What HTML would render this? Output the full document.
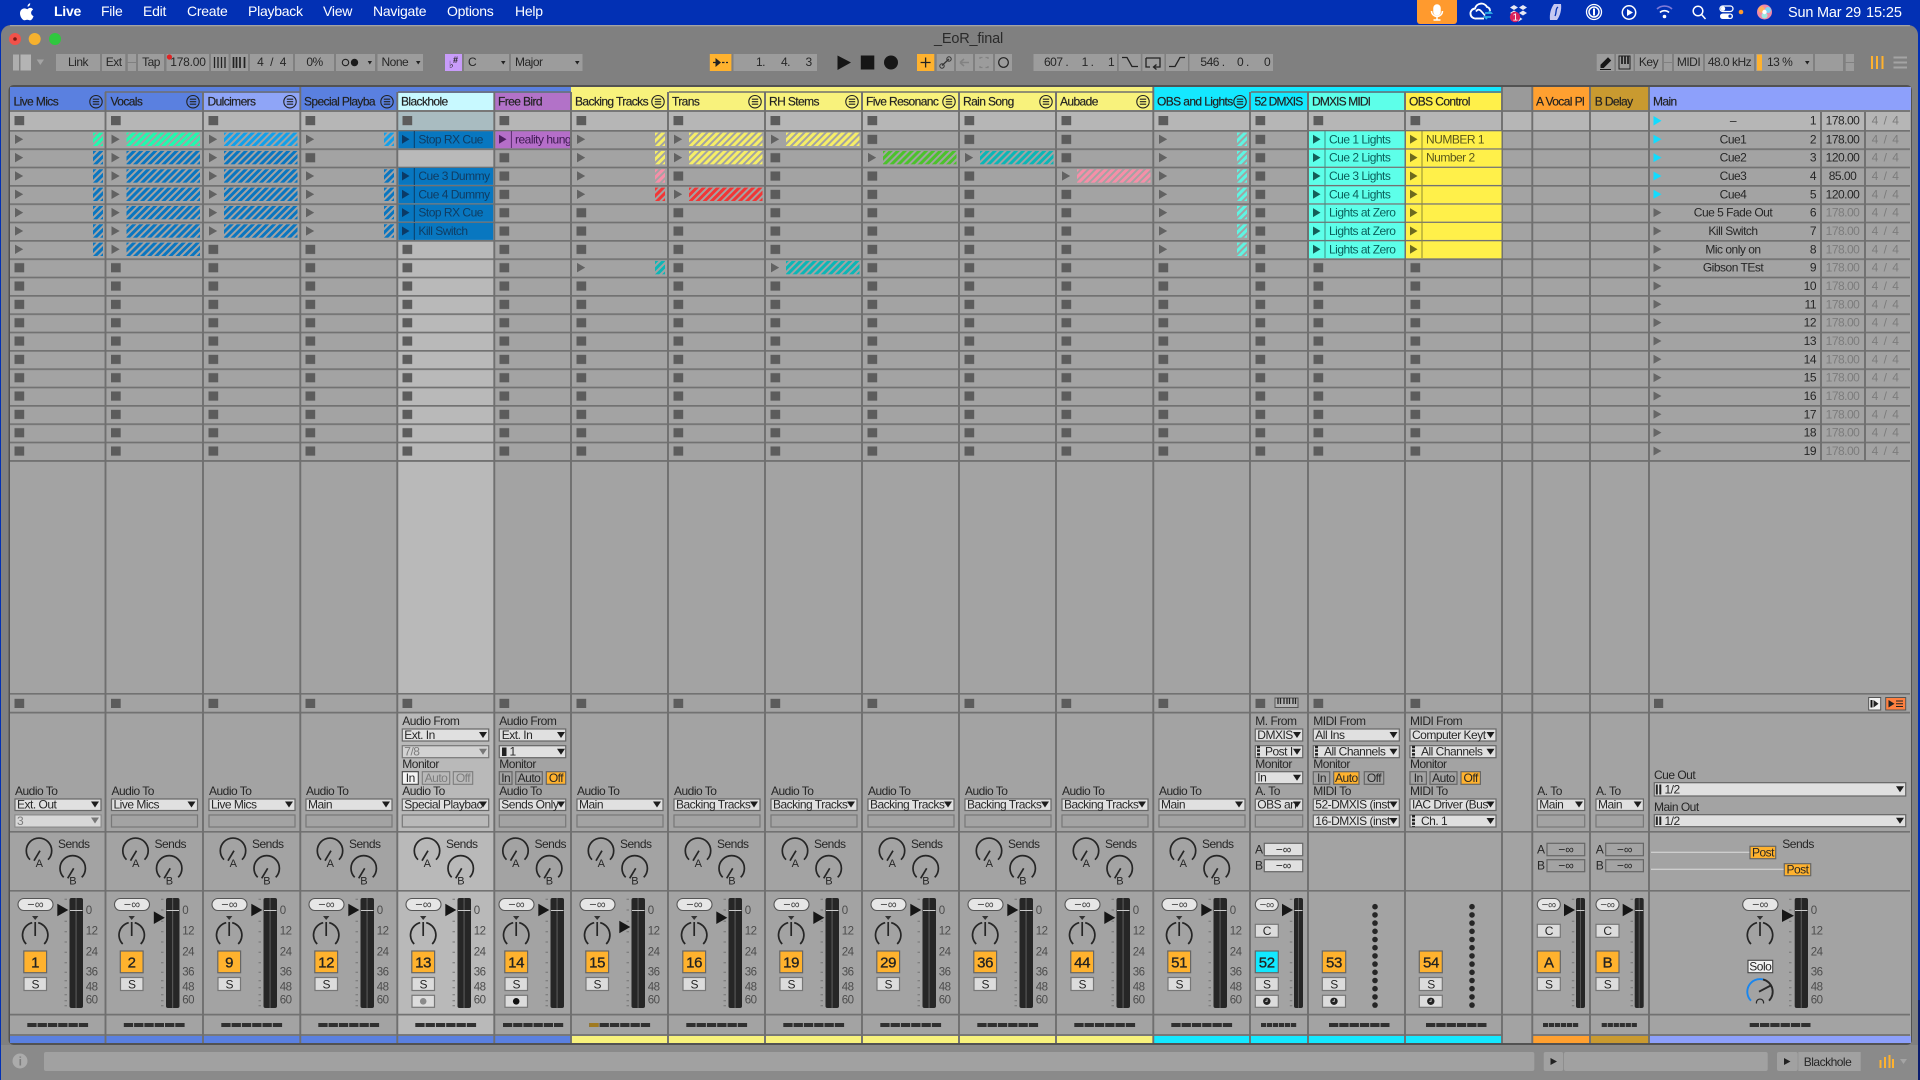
<!DOCTYPE html>
<html><head><meta charset="utf-8"><title>_EoR_final</title>
<style>
html,body{margin:0;padding:0;background:#0430b0;overflow:hidden}
svg{display:block;filter:blur(.3px)}
text{font-family:"Liberation Sans",sans-serif;font-size:12px;letter-spacing:-.5px;fill:#262626}
.m{fill:#fff;font-size:14px;letter-spacing:-.25px}
.c{text-anchor:middle}
.b{fill:#9c9c9c}
.d{fill:#e0e0e0;stroke:#666;stroke-width:1.2}
.e{fill:none;stroke:#787878;stroke-width:1.2}
.q{fill:#a3a3a3;stroke:#666;stroke-width:1.2}
.o{fill:#ffb22e;stroke:#666;stroke-width:1.2}
.n{font-size:15px;text-anchor:middle;letter-spacing:-.3px;fill:#222;stroke:#222;stroke-width:.3px}
.g{fill:#7c7c7c}
.s{fill:#7c7c7c;word-spacing:3px}
.h{fill:#222;letter-spacing:-.6px;stroke:#222;stroke-width:.18px}
.t{fill:#0b5f5a}
.y{fill:#59561c}
.w{fill:#103c62}
.sc{fill:#4c4c4c;font-size:11.5px}
</style></head><body>
<svg xmlns="http://www.w3.org/2000/svg" width="1920" height="1080" viewBox="0 0 1920 1080">
<defs>
<pattern id="gr" width="100" height="18.3333" y="130" patternUnits="userSpaceOnUse"><rect width="100" height="1.7" fill="#727272"/></pattern>
<pattern id="st" width="40" height="18.3333" y="130" patternUnits="userSpaceOnUse"><rect x="4.500" y="4.800" width="9.700" height="9.200" fill="#5c5c5c"/></pattern>
<pattern id="pb" width="5" height="5" patternUnits="userSpaceOnUse" patternTransform="rotate(45)"><rect width="3" height="5" fill="#0a76c0"/></pattern>
<pattern id="pl" width="5" height="5" patternUnits="userSpaceOnUse" patternTransform="rotate(45)"><rect width="3" height="5" fill="#12a0ea"/></pattern>
<pattern id="pm" width="5" height="5" patternUnits="userSpaceOnUse" patternTransform="rotate(45)"><rect width="3" height="5" fill="#1dfcae"/></pattern>
<pattern id="py" width="5" height="5" patternUnits="userSpaceOnUse" patternTransform="rotate(45)"><rect width="3" height="5" fill="#f6ee68"/></pattern>
<pattern id="pg" width="5" height="5" patternUnits="userSpaceOnUse" patternTransform="rotate(45)"><rect width="3" height="5" fill="#4cc22c"/></pattern>
<pattern id="pt" width="5" height="5" patternUnits="userSpaceOnUse" patternTransform="rotate(45)"><rect width="3" height="5" fill="#0cb6b6"/></pattern>
<pattern id="pp" width="5" height="5" patternUnits="userSpaceOnUse" patternTransform="rotate(45)"><rect width="3" height="5" fill="#f68fa8"/></pattern>
<pattern id="pr" width="5" height="5" patternUnits="userSpaceOnUse" patternTransform="rotate(45)"><rect width="3" height="5" fill="#f23636"/></pattern>
<pattern id="pc" width="5" height="5" patternUnits="userSpaceOnUse" patternTransform="rotate(45)"><rect width="3" height="5" fill="#5ef4e2"/></pattern>
<polygon id="tr" points="5,4.600 13.200,9.300 5,14" fill="#626262"/>
<g id="TL"><use href="#tr"/><rect x="20" y="2.600" width="73.500" height="13.400"/></g>
<g id="TK"><use href="#tr"/><rect x="83" y="2.600" width="10" height="13.400"/></g>
<g id="ms"><rect x="4.500" y="116" width="9.700" height="9.200" fill="#5c5c5c"/><rect x="4.500" y="698.800" width="9.700" height="9.200" fill="#5c5c5c"/></g>
<polygon id="ar" points="-4,-3 4,-3 0,3" fill="#1c1c1c"/>
<polygon id="ag" points="-4,-3 4,-3 0,3" fill="#777"/>
<g id="hi" fill="none" stroke="#222" stroke-width="1.100"><circle r="6.200"/><path d="M-3.200-2.500H3.200M-3.200 0H3.200M-3.200 2.500H3.200"/></g>
<g id="io"><text x="5" y="795">Audio To</text><rect class="d" x="5" y="799" width="86" height="11.500"/><use href="#ar" x="85" y="804.500"/><rect class="e" x="5" y="815" width="86" height="12"/></g>
<g id="kn" fill="none" stroke="#262626" stroke-width="1.700"><path d="M-9 9A12.700 12.700 0 1 1 9 9"/><path d="M1 0L-5 10"/></g>
<g id="sd"><use href="#kn" x="29" y="850.700"/><use href="#kn" x="62.700" y="868.300"/><text x="48" y="848">Sends</text><text class="c" x="29" y="867" style="font-size:11px">A</text><text class="c" x="62.700" y="884.500" style="font-size:11px">B</text></g>
<g id="pk" fill="none" stroke="#262626" stroke-width="1.700"><path d="M-9 9A12.700 12.700 0 0 1 -3 -12.300M9 9A12.700 12.700 0 0 0 3 -12.300M0 -13V1"/><polygon points="-3.200,-19 3.200,-19 0,-15" fill="#333" stroke="none"/></g>
<path id="tk" d="M0 899.300h2.500M0 910h2.500M0 921.300h2.500M0 931.700h2.500M0 942h2.500M0 952.300h2.500M0 962.700h2.500M0 972.300h2.500M0 980.700h2.500M0 987.700h2.500M0 994.700h2.500M0 1000.700h2.500M0 1005.700h2.500" stroke="#757575" stroke-width="1" fill="none"/>
<g id="inf"><text class="c" y="908.500" style="font-size:12.500px;letter-spacing:0;fill:#444">−∞</text></g>
<g id="mx"><rect x="8" y="898.500" width="35" height="12" rx="6" fill="#e6e6e6" stroke="#555" stroke-width="1.100"/><use href="#inf" x="25.500"/><use href="#pk" x="25.200" y="935"/><rect x="14" y="977.500" width="22.500" height="13" fill="#dcdcdc" stroke="#777" stroke-width="1.200"/><text class="c" x="25.200" y="988.500">S</text><use href="#tk" x="54.500"/><rect x="59.500" y="898" width="13.500" height="110" rx="2" fill="#262626"/><rect x="65.500" y="898" width="1.200" height="110" fill="#555"/><rect x="60" y="910" width="12.500" height="1" fill="#ccc"/></g>
<g id="sc"><text class="sc" x="75.700" y="914">0</text><text class="sc" x="75.700" y="934.700">12</text><text class="sc" x="75.700" y="955.700">24</text><text class="sc" x="75.700" y="975.700">36</text><text class="sc" x="75.700" y="990.700">48</text><text class="sc" x="75.700" y="1003.700">60</text></g>
<polygon id="vt" points="47.300,-6.300 58.300,0 47.300,6.300" fill="#161616"/>
<rect id="ac" class="o" x="13.800" y="951" width="22.800" height="21.700"/>
<path id="xf" d="M17.300 1025H78.800" stroke="#303030" stroke-width="4" stroke-dasharray="9.300 1" fill="none"/>
<path id="xn" d="M10 1025H46" stroke="#303030" stroke-width="4" stroke-dasharray="5.200 .8" fill="none"/>
<g id="nm"><rect x="4.300" y="898.500" width="23" height="12" rx="6" fill="#e6e6e6" stroke="#555" stroke-width="1.100"/><text class="c" x="15.800" y="908.500" style="font-size:11.500px;letter-spacing:-.3px;fill:#444">−∞</text><rect x="4.300" y="924.300" width="23" height="13" fill="#dcdcdc" stroke="#777" stroke-width="1.200"/><text class="c" x="15.800" y="935">C</text><rect x="4.300" y="977.500" width="23" height="13" fill="#dcdcdc" stroke="#777" stroke-width="1.200"/><text class="c" x="15.800" y="988.500">S</text><use href="#tk" x="38.800"/><rect x="43" y="898" width="9" height="110" rx="2" fill="#262626"/><rect x="47" y="898" width="1" height="110" fill="#555"/><rect x="43.500" y="910" width="8" height="1" fill="#ccc"/></g>
<polygon id="vn" points="31,-6.300 42,0 31,6.300" fill="#161616"/>
<g id="clk"><rect x="0" y="0" width="23" height="12" fill="#dcdcdc" stroke="#777" stroke-width="1.200"/><circle cx="11.500" cy="6" r="3.700" fill="#222"/><path d="M11.800 3.800V6H10" stroke="#ddd" stroke-width=".8" fill="none"/></g>
<g id="dots" fill="#262626"><circle cy="906.700" r="2.800"/><circle cy="914.900" r="2.800"/><circle cy="923.100" r="2.800"/><circle cy="931.300" r="2.800"/><circle cy="939.500" r="2.800"/><circle cy="947.700" r="2.800"/><circle cy="955.900" r="2.800"/><circle cy="964.100" r="2.800"/><circle cy="972.300" r="2.800"/><circle cy="980.500" r="2.800"/><circle cy="988.700" r="2.800"/><circle cy="996.900" r="2.800"/><circle cy="1005.100" r="2.800"/></g>
<path id="vd" d="M1.500 0V12" stroke="#222" stroke-width="3" stroke-dasharray="2.500 1.200" fill="none"/>
<clipPath id="cf"><rect x="495" y="130" width="75" height="19"/></clipPath>
</defs>

<!-- desktop & window -->
<rect width="1920" height="1080" fill="#0230b4"/>
<rect x="1912" y="1000" width="8" height="80" fill="#0a1c6e"/>
<rect x="1" y="25" width="1917" height="1075" rx="10" fill="#808080"/>
<rect x="10" y="25.300" width="1900" height=".9" fill="#b4b4b4"/>
<rect x="1" y="1045" width="1917" height="35" fill="#8a8a8a"/>

<!-- menu bar -->
<path fill="#fff" d="M30.500 7.800c-1 0-2.300.6-3.100 1.400-.7-.2-1.800-.8-2.900-.8-2.500 0-4.500 2.100-4.500 5 0 3.200 2.400 6.900 4.400 6.900 1 0 1.500-.6 2.800-.6s1.800.6 2.800.6c1.600 0 3-2.300 3.500-4.100-1.500-.7-2.400-1.900-2.400-3.400 0-1.400.8-2.500 2-3.200-.7-1.100-1.800-1.800-2.600-1.800zM30.200 3.300c-1.400.2-2.800 1.700-2.600 3.400 1.500 0 2.800-1.600 2.600-3.400z"/>
<text class="m" x="54" y="16" style="font-weight:bold">Live</text>
<text class="m" x="101" y="16">File</text><text class="m" x="143" y="16">Edit</text><text class="m" x="187" y="16">Create</text><text class="m" x="248" y="16">Playback</text><text class="m" x="323" y="16">View</text><text class="m" x="373" y="16">Navigate</text><text class="m" x="447" y="16">Options</text><text class="m" x="515" y="16">Help</text>
<path d="M1417 0H1457V21a3 3 0 0 1-3 3H1420a3 3 0 0 1-3-3Z" fill="#ff9a2e"/>
<g fill="none" stroke="#fff" stroke-width="1.500"><rect x="1434" y="5" width="6" height="10" rx="3" fill="#fff"/><path d="M1431.500 11a5.500 5.500 0 0 0 11 0M1437 16.500V19.500M1433.500 20H1440.500"/>
<path d="M1476 18.500a5 5 0 0 1-1-10 6.500 6.500 0 0 1 12-1.500c2 .5 3 2 3 4" stroke-width="1.900"/><path d="M1476 11.500c2-3 4-2 6 .5l3 3.500" stroke-width="1.700"/><path d="M1476 18.500H1484" stroke-width="1.900"/>
<circle cx="1594" cy="12" r="7.500" stroke-width="1.300"/><circle cx="1594" cy="12" r="5"/><path d="M1594 8.500V15.500" stroke-width="2"/>
<circle cx="1629" cy="12.500" r="6.700"/>
<circle cx="1698" cy="11" r="4.800"/><path d="M1701.500 14.500L1705.500 19"/></g>
<path d="M1485 13h6l-2-2M1491 17h-6l2 2" stroke="#2fb0e8" stroke-width="1.800" fill="none"/>
<path d="M1514 5l4 2.500-4 2.500-4-2.500zM1523 5l4 2.500-4 2.500-4-2.500zM1514 10.500l4 2.500-4 2.500-4-2.500zM1523 10.500l4 2.500-4 2.500-4-2.500zM1518.500 16.500l4 2.500-4 2.500-4-2.500z" fill="#e8e8f4"/>
<circle cx="1515" cy="17" r="5.200" fill="#d8205c"/><text x="1515" y="20.700" class="c" style="fill:#fff;font-size:10px">1</text>
<path d="M1550 20c-.8-6 1-12 4-16h7c.8 6-1 12-4 16z" fill="#c6c8f2"/><path d="M1558 7c-3 2-1 5-3 9" stroke="#0230b4" fill="none" stroke-width="1.300"/>
<polygon points="1627,9 1627,16 1633,12.500" fill="#fff"/>
<path d="M1657 9a11 11 0 0 1 15 0" stroke="#7f7ad8" stroke-width="1.700" fill="none"/><path d="M1660 12.500a6.500 6.500 0 0 1 9 0" stroke="#fff" stroke-width="1.700" fill="none"/><circle cx="1664.500" cy="16.500" r="1.800" fill="#fff"/>
<rect x="1720" y="6" width="13" height="5.500" rx="2.700" fill="none" stroke="#fff" stroke-width="1.300"/><rect x="1720" y="13.500" width="13" height="5.500" rx="2.700" fill="#fff"/><circle cx="1723" cy="8.700" r="2.200" fill="#fff"/><circle cx="1730" cy="16.200" r="1.600" fill="#0230b4"/><circle cx="1741" cy="12" r="2.300" fill="#ff9a2e"/>
<circle cx="1764.500" cy="12" r="7.500" fill="#f08aa8"/><circle cx="1761.500" cy="9.500" r="3.200" fill="#ffb060"/><circle cx="1768" cy="10" r="3" fill="#7fd6f5"/><circle cx="1764.500" cy="15.500" r="3" fill="#9fe8e0"/><circle cx="1764.500" cy="12" r="2.200" fill="#fff"/>
<text class="m" x="1788" y="17" style="font-size:14.500px;letter-spacing:-.2px">Sun Mar 29</text><text class="m" x="1866" y="17" style="font-size:14.500px;letter-spacing:-.1px">15:25</text>

<!-- traffic lights -->
<circle cx="15" cy="39" r="6" fill="#f2524a"/><circle cx="15" cy="39" r="1.800" fill="#7a1a14"/><circle cx="34.700" cy="39" r="6" fill="#f6b12e"/><circle cx="55" cy="39" r="6" fill="#2fc83f"/>
<text class="c" x="968.500" y="43" style="font-size:14.500px;fill:#2a2a2a;letter-spacing:-.2px">_EoR_final</text>

<!-- toolbar -->
<rect x="13" y="54.500" width="6" height="16" fill="#aeaeae"/><rect x="20.500" y="54.500" width="10.500" height="16" fill="#b4b4b4"/><polygon points="36.700,59.500 44,59.500 40.300,65" fill="#a4a4a4"/>
<g class="b"><rect x="56" y="54" width="44" height="17"/><rect x="102" y="54" width="23.300" height="17"/><rect x="127.800" y="54" width="8.200" height="8"/><rect x="127.800" y="63" width="8.200" height="8"/><rect x="138" y="54" width="26" height="17"/><rect x="166.500" y="54" width="42.500" height="17"/><rect x="211" y="54" width="17.600" height="17"/><rect x="230.600" y="54" width="17.400" height="17"/><rect x="250" y="54" width="43" height="17"/><rect x="295" y="54" width="39" height="17"/><rect x="336" y="54" width="39" height="17"/><rect x="377.500" y="54" width="45.500" height="17"/><rect x="464" y="54" width="45" height="17"/><rect x="511" y="54" width="71.500" height="17"/><rect x="733.500" y="54" width="83.500" height="17"/><rect x="936.700" y="54" width="17.300" height="17"/><rect x="956" y="54" width="17" height="17"/><rect x="975" y="54" width="18" height="17"/><rect x="995" y="54" width="17" height="17"/><rect x="1033.500" y="54" width="83.500" height="17"/><rect x="1118.800" y="54" width="22" height="17"/><rect x="1142.400" y="54" width="22" height="17"/><rect x="1166" y="54" width="22" height="17"/><rect x="1189.400" y="54" width="83.600" height="17"/><rect x="1596.700" y="54" width="17.600" height="17"/><rect x="1616" y="54" width="17.500" height="17"/><rect x="1635" y="54" width="27" height="17"/><rect x="1664" y="54" width="8" height="8"/><rect x="1664" y="63" width="8" height="8"/><rect x="1674" y="54" width="29" height="17"/><rect x="1705" y="54" width="49" height="17"/><rect x="1756" y="54" width="57" height="17"/><rect x="1815" y="54" width="28" height="17"/><rect x="1845.700" y="54" width="8.300" height="8"/><rect x="1845.700" y="63" width="8.300" height="8"/></g>
<text class="c" x="78" y="66">Link</text><text class="c" x="113.700" y="66">Ext</text><text class="c" x="151" y="66">Tap</text><circle cx="169.400" cy="57" r="2.600" fill="#e02424"/><text class="c" x="188" y="66" style="letter-spacing:-.2px">178.00</text>
<path d="M214.500 57V68M218 57V68M221.500 57V68M225 57V68" stroke="#222" stroke-width="1.300"/><path d="M233.500 57V68M236.500 57V68M240 57V68M244.500 57V68" stroke="#222" stroke-width="1.700"/>
<text class="c" x="271.500" y="66" style="word-spacing:4px">4 / 4</text><text class="c" x="314.500" y="66">0%</text>
<circle cx="345.500" cy="62.500" r="3.200" fill="none" stroke="#222" stroke-width="1.100"/><circle cx="354.500" cy="62.500" r="3.700" fill="#1b1b1b"/><polygon points="367.700,61 372,61 369.800,64.500" fill="#222"/>
<text x="381.500" y="66">None</text><polygon points="416,61 420.500,61 418.200,64.500" fill="#222"/>
<rect x="445" y="54" width="17" height="17" fill="#c89cfa"/><text x="449" y="68" style="font-size:10px">♭</text><text x="453" y="63" style="font-size:9px;font-weight:bold">#</text>
<text x="468" y="66">C</text><polygon points="501,61 505.500,61 503.300,64.500" fill="#222"/><text x="515" y="66">Major</text><polygon points="575,61 579.500,61 577.300,64.500" fill="#222"/>
<rect x="709.800" y="54" width="21.600" height="17" fill="#ffb22e"/><path d="M713 62.500H718M722 62.500H724.500M726 62.500H728" stroke="#222" stroke-width="1.300"/><polygon points="715.500,58 721,62.500 715.500,67" fill="#222"/>
<text x="756" y="66">1.</text><text x="781" y="66">4.</text><text x="805.500" y="66">3</text>
<polygon points="837.500,55.500 851,62.500 837.500,70" fill="#161616"/><rect x="860.800" y="55.500" width="13.500" height="14" fill="#161616"/><circle cx="891" cy="62.500" r="7" fill="#161616"/>
<rect x="917" y="54" width="17.300" height="17" fill="#ffb22e"/><path d="M925.600 57.500V67.500M920.600 62.500H930.600" stroke="#222" stroke-width="1.300"/>
<path d="M942 65.500L949 59" stroke="#333" stroke-width="1.200"/><circle cx="942" cy="66" r="2.200" fill="none" stroke="#333"/><circle cx="949" cy="59" r="2.200" fill="none" stroke="#333"/>
<path d="M960 62.500H969M960 62.500L964 59M960 62.500L964 66" stroke="#828282" stroke-width="1.500" fill="none"/>
<path d="M980 59V57.500H982.500M985.500 57.500H988V59M988 66V67.500H985.500M982.500 67.500H980V66" stroke="#828282" stroke-width="1.300" fill="none"/>
<circle cx="1003.500" cy="62.500" r="4.800" fill="none" stroke="#222" stroke-width="1.200"/>
<text x="1044" y="66">607 .</text><text x="1081.600" y="66">1 .</text><text x="1108" y="66">1</text>
<path d="M1122 57.500H1127L1132 66.500H1138" stroke="#222" fill="none" stroke-width="1.300"/><path d="M1146 58H1160V67H1154M1156.500 64.500L1153.500 67L1156.500 69.500M1146 58V67H1150" stroke="#222" fill="none" stroke-width="1.300"/><path d="M1169 66.500H1175L1180 57.500H1185" stroke="#222" fill="none" stroke-width="1.300"/>
<text x="1200.400" y="66">546 .</text><text x="1237" y="66">0 .</text><text x="1264" y="66">0</text>
<path d="M1601 65L1608 58L1610.500 60.500L1603.500 67.500H1601ZM1600 69.500H1611" fill="#161616" stroke="#161616"/>
<rect x="1619" y="56" width="11" height="13" fill="none" stroke="#222"/><path d="M1622 56V64M1625 56V64M1628 56V64" stroke="#222" stroke-width="1.800"/>
<text class="c" x="1648.500" y="66">Key</text><text class="c" x="1688.500" y="66">MIDI</text><text class="c" x="1729.500" y="66">48.0 kHz</text>
<rect x="1757" y="54.500" width="5" height="16" fill="#ffb22e"/><text x="1767" y="66">13 %</text><polygon points="1805,61 1809.500,61 1807.300,64.500" fill="#222"/>
<path d="M1872 56V69M1877 56V69M1882.500 56V69" stroke="#ffb22e" stroke-width="2"/><path d="M1893.500 57.500H1907M1893.500 62.500H1907M1893.500 67.500H1907" stroke="#a4a4a4" stroke-width="2"/>

<!-- panel -->
<rect x="8.500" y="85" width="1903.500" height="960" rx="5" fill="#525252"/>
<rect x="10" y="87" width="1901" height="956" rx="3" fill="#a3a3a3"/>
<rect x="1503" y="87" width="29" height="25" fill="#9a9a9a"/>
<!-- selected column -->
<rect x="398" y="112" width="96" height="923" fill="#b9b9b9"/>
<rect x="398" y="695" width="96" height="17" fill="#ababab"/>
<rect x="10" y="112" width="1900" height="18" fill="#b6b6b6"/>
<rect x="398" y="112" width="96" height="18" fill="#a9bcc1"/>
<rect x="10" y="130" width="1900" height="331" fill="url(#gr)"/>
<path d="M10 111H1910M10 461H1910M10 693.800H1910M10 712.600H1910M10 831.800H1910M10 890.800H1910M10 1014.600H1910M10 1035H1503M1532 1035H1910" stroke="#727272" stroke-width="1.700" fill="none"/>
<!-- colour strips -->
<rect x="10" y="87" width="561" height="6" fill="#5a80e0"/><rect x="571" y="87" width="583" height="6" fill="#f8f27c"/><rect x="1154" y="87" width="348" height="6" fill="#14e8ff"/>
<rect x="10" y="93" width="95" height="17" fill="#5a80e0"/><rect x="106" y="93" width="97" height="17" fill="#5a80e0"/><rect x="204" y="93" width="96" height="17" fill="#8fa5f7"/><rect x="301" y="93" width="96" height="17" fill="#5a80e0"/><rect x="398" y="93" width="96" height="17" fill="#c8f9ff"/><rect x="495" y="93" width="76" height="17" fill="#b272c8"/>
<rect x="572" y="93" width="96" height="17" fill="#f8f27c"/><rect x="669" y="93" width="96" height="17" fill="#f8f27c"/><rect x="766" y="93" width="96" height="17" fill="#f8f27c"/><rect x="863" y="93" width="96" height="17" fill="#f8f27c"/><rect x="960" y="93" width="96" height="17" fill="#f8f27c"/><rect x="1057" y="93" width="96" height="17" fill="#f8f27c"/>
<rect x="1154" y="93" width="96" height="17" fill="#14e8ff"/><rect x="1251" y="93" width="57" height="17" fill="#14e8ff"/><rect x="1309" y="93" width="96" height="17" fill="#5dffe9"/><rect x="1406" y="93" width="96" height="17" fill="#fff04a"/>
<rect x="1533" y="87" width="57" height="23" fill="#ffa030"/><rect x="1591" y="87" width="58" height="23" fill="#c99a30"/><path d="M1650 87H1911V110H1650Z" fill="#8da0fb"/>
<path d="M105 92H300M398 92H571M669 92H1153M1251 92H1502" stroke="#6f6f6f" stroke-width="1.400"/>
<rect x="10" y="1036" width="561" height="7" fill="#5a80e0"/><rect x="571" y="1036" width="583" height="7" fill="#f8f27c"/><rect x="1154" y="1036" width="348" height="7" fill="#14e8ff"/><rect x="1533" y="1036" width="57" height="7" fill="#ffa030"/><rect x="1591" y="1036" width="58" height="7" fill="#c99a30"/><rect x="1650" y="1036" width="261" height="7" fill="#8da0fb"/>
<!-- column separators -->
<path d="M105.500 92V1043M203 92V1043M300.300 87V1043M397.300 92V1043M494.300 92V1043M571 92V1043M668 92V1043M765 92V1043M862 92V1043M959 92V1043M1056 92V1043M1153.300 87V1043M1250 92V1043M1308 92V1043M1405 92V1043M1502 87V1043M1532.300 87V1043M1590 87V1043M1649 87V1043M1821 112V461M1865 112V461" stroke="#6f6f6f" stroke-width="1.900" fill="none"/>

<!-- Track: Live Mics -->
<g transform="translate(10 0)"><text class="h" x="3.500" y="105.700">Live Mics</text><use href="#hi" x="86" y="101.700"/><use href="#ms"/><rect fill="url(#st)" y="258.330" width="20" height="201.670"/>
<use href="#TK" y="130" fill="url(#pm)"/><use href="#TK" y="148.330" fill="url(#pb)"/><use href="#TK" y="166.670" fill="url(#pb)"/><use href="#TK" y="185" fill="url(#pb)"/><use href="#TK" y="203.330" fill="url(#pb)"/><use href="#TK" y="221.670" fill="url(#pb)"/><use href="#TK" y="240" fill="url(#pb)"/>
<use href="#io"/><text x="7" y="808.300">Ext. Out</text><rect x="5" y="815" width="86" height="12" fill="#d8d8d8" stroke="#8a8a8a"/><text x="7" y="825" class="g">3</text><use href="#ag" x="85" y="820.500"/>
<use href="#sd"/><use href="#mx"/><use href="#sc"/><use href="#vt" y="910"/><use href="#ac"/><text class="n" x="25.200" y="967.500">1</text><use href="#xf"/></g>
<!-- Vocals -->
<g transform="translate(106.500 0)"><text class="h" x="4" y="105.700">Vocals</text><use href="#hi" x="86.500" y="101.700"/><use href="#ms"/><rect fill="url(#st)" y="258.330" width="20" height="201.670"/>
<use href="#TL" y="130" fill="url(#pm)"/><use href="#TL" y="148.330" fill="url(#pb)"/><use href="#TL" y="166.670" fill="url(#pb)"/><use href="#TL" y="185" fill="url(#pb)"/><use href="#TL" y="203.330" fill="url(#pb)"/><use href="#TL" y="221.670" fill="url(#pb)"/><use href="#TL" y="240" fill="url(#pb)"/>
<use href="#io"/><text x="7" y="808.300">Live Mics</text><use href="#sd"/><use href="#mx"/><use href="#sc"/><use href="#vt" y="917.700"/><use href="#ac"/><text class="n" x="25.200" y="967.500">2</text><use href="#xf"/></g>
<!-- Dulcimers -->
<g transform="translate(204 0)"><text class="h" x="3.500" y="105.700">Dulcimers</text><use href="#hi" x="86" y="101.700"/><use href="#ms"/><rect fill="url(#st)" y="240" width="20" height="220"/>
<use href="#TL" y="130" fill="url(#pl)"/><use href="#TL" y="148.330" fill="url(#pb)"/><use href="#TL" y="166.670" fill="url(#pb)"/><use href="#TL" y="185" fill="url(#pb)"/><use href="#TL" y="203.330" fill="url(#pb)"/><use href="#TL" y="221.670" fill="url(#pb)"/>
<use href="#io"/><text x="7" y="808.300">Live Mics</text><use href="#sd"/><use href="#mx"/><use href="#sc"/><use href="#vt" y="910"/><use href="#ac"/><text class="n" x="25.200" y="967.500">9</text><use href="#xf"/></g>
<!-- Special Playba -->
<g transform="translate(301 0)"><text class="h" x="3" y="105.700">Special Playba</text><use href="#hi" x="86" y="101.700"/><use href="#ms"/><rect fill="url(#st)" y="148.330" width="20" height="18.330"/><rect fill="url(#st)" y="240" width="20" height="220"/>
<use href="#TK" y="130" fill="url(#pl)"/><use href="#TK" y="166.670" fill="url(#pb)"/><use href="#TK" y="185" fill="url(#pb)"/><use href="#TK" y="203.330" fill="url(#pb)"/><use href="#TK" y="221.670" fill="url(#pb)"/>
<use href="#io"/><text x="7" y="808.300">Main</text><use href="#sd"/><use href="#mx"/><use href="#sc"/><use href="#vt" y="910"/><use href="#ac"/><text class="n" x="25.200" y="967.500">12</text><use href="#xf"/></g>
<!-- Blackhole -->
<g transform="translate(398 0)"><text class="h" x="3" y="105.700">Blackhole</text><use href="#ms"/><rect fill="url(#st)" y="240" width="20" height="220"/>
<g fill="#0877c0"><rect x=".4" y="131.300" width="94.800" height="17"/><rect x=".4" y="167.900" width="94.800" height="17"/><rect x=".4" y="186.300" width="94.800" height="17"/><rect x=".4" y="204.600" width="94.800" height="17"/><rect x=".4" y="222.900" width="94.800" height="17"/></g>
<path d="M16.300 131V148M16.300 168V185M16.300 186V203M16.300 205V222M16.300 223V240" stroke="#0a3c66"/>
<g fill="#0b3a66"><polygon points="4,134.800 11.500,139.300 4,143.800"/><polygon points="4,171.500 11.500,176 4,180.500"/><polygon points="4,189.800 11.500,194.300 4,198.800"/><polygon points="4,208.100 11.500,212.600 4,217.100"/><polygon points="4,226.500 11.500,231 4,235.500"/></g>
<text class="w" x="20.400" y="143.300">Stop RX Cue</text><text class="w" x="20.400" y="180">Cue 3 Dummy</text><text class="w" x="20.400" y="198.300">Cue 4 Dummy</text><text class="w" x="20.400" y="216.700">Stop RX Cue</text><text class="w" x="20.400" y="235">Kill Switch</text>
<text x="4.300" y="725">Audio From</text><rect class="d" x="4.300" y="729" width="86.400" height="12"/><text x="6.300" y="738.800">Ext. In</text><use href="#ar" x="85" y="735"/>
<rect x="4.300" y="745.700" width="86.400" height="12" fill="#d2d2d2" stroke="#777" stroke-width="1.200"/><text class="g" x="6.300" y="755.500">7/8</text><use href="#ag" x="85" y="751.700"/>
<text x="4.300" y="768">Monitor</text><rect x="4.300" y="771.700" width="16" height="12.600" fill="#f4f4f4" stroke="#444" stroke-width="1.100"/><text class="c" x="12.300" y="782">In</text><rect x="24.300" y="771.700" width="27.400" height="12.600" fill="#b9b9b9" stroke="#7c7c7c" stroke-width="1.100"/><text class="c g" x="38" y="782">Auto</text><rect x="55.300" y="771.700" width="19.400" height="12.600" fill="#b9b9b9" stroke="#7c7c7c" stroke-width="1.100"/><text class="c g" x="65" y="782">Off</text>
<text x="4.300" y="795">Audio To</text><rect class="d" x="4.300" y="799" width="86.400" height="11.500"/><text x="6.300" y="808.300">Special Playbac</text><use href="#ar" x="85" y="804.500"/><rect class="e" x="4.300" y="815" width="86.400" height="12"/>
<use href="#sd"/><use href="#mx"/><use href="#sc"/><use href="#vt" y="910"/><use href="#ac"/><text class="n" x="25.200" y="967.500">13</text>
<rect x="14" y="995.300" width="22.500" height="12" fill="#dcdcdc" stroke="#777" stroke-width="1.200"/><circle cx="25.200" cy="1001.300" r="3.300" fill="#8a8a8a"/><use href="#xf"/></g>
<!-- Free Bird -->
<g transform="translate(495 0)"><text class="h" x="3" y="105.700">Free Bird</text><use href="#ms"/><rect fill="url(#st)" y="148.330" width="20" height="311.670"/>
<rect x=".5" y="131.300" width="74.500" height="17" fill="#b56ec9"/><path d="M16.400 131V148" stroke="#5a2d6e"/><polygon points="4,134.800 11.500,139.300 4,143.800" fill="#4d2060"/>
<text x="4.300" y="725">Audio From</text><rect class="d" x="4.300" y="729" width="66.400" height="12"/><text x="6.800" y="738.800">Ext. In</text><use href="#ar" x="66" y="735"/>
<rect class="d" x="4.300" y="745.700" width="66.400" height="12"/><rect x="7" y="747.500" width="4.500" height="8.500" fill="#222"/><text x="14.500" y="755.500">1</text><use href="#ar" x="66" y="751.700"/>
<text x="4.300" y="768">Monitor</text><rect x="4.300" y="771.700" width="12.700" height="12.600" class="q"/><text class="c" x="10.700" y="782">In</text><rect x="20.700" y="771.700" width="26.600" height="12.600" class="q"/><text class="c" x="34" y="782">Auto</text><rect x="51.300" y="771.700" width="19.400" height="12.600" class="o"/><text class="c" x="61" y="782">Off</text>
<text x="4.300" y="795">Audio To</text><rect class="d" x="4.300" y="799" width="66.400" height="11.500"/><text x="6.300" y="808.300">Sends Only</text><use href="#ar" x="66" y="804.500"/><rect class="e" x="4.300" y="815" width="66.400" height="12"/>
<g transform="translate(-8.500 0)"><use href="#sd"/></g>
<g transform="translate(-4 0)"><use href="#mx"/><use href="#vt" y="910"/><use href="#ac"/><text class="n" x="25.200" y="967.500">14</text><rect x="14" y="995.300" width="22.500" height="12" fill="#dcdcdc" stroke="#777" stroke-width="1.200"/><circle cx="25.200" cy="1001.300" r="3.300" fill="#111"/></g>
<path d="M8 1025H68.500" stroke="#303030" stroke-width="4" stroke-dasharray="9.200 1" fill="none"/></g>
<text clip-path="url(#cf)" x="515" y="143.300" style="fill:#3c1a50">reality hunger</text>
<!-- Backing Tracks -->
<g transform="translate(572 0)"><text class="h" x="3" y="105.700">Backing Tracks</text><use href="#hi" x="86" y="101.700"/><use href="#ms"/><rect fill="url(#st)" y="203.330" width="20" height="55"/><rect fill="url(#st)" y="276.670" width="20" height="183.330"/>
<use href="#TK" y="130" fill="url(#py)"/><use href="#TK" y="148.330" fill="url(#py)"/><use href="#TK" y="166.670" fill="url(#pp)"/><use href="#TK" y="185" fill="url(#pr)"/><use href="#TK" y="258.330" fill="url(#pt)"/>
<use href="#io"/><text x="7" y="808.300">Main</text><use href="#sd"/><use href="#mx"/><use href="#sc"/><use href="#vt" y="927"/><use href="#ac"/><text class="n" x="25.200" y="967.500">15</text><use href="#xf"/><rect x="17.300" y="1023" width="9.300" height="4" fill="#a07a20"/></g>
<!-- Trans -->
<g transform="translate(669 0)"><text class="h" x="3" y="105.700">Trans</text><use href="#hi" x="86" y="101.700"/><use href="#ms"/><rect fill="url(#st)" y="166.670" width="20" height="18.330"/><rect fill="url(#st)" y="203.330" width="20" height="256.670"/>
<use href="#TL" y="130" fill="url(#py)"/><use href="#TL" y="148.330" fill="url(#py)"/><use href="#TL" y="185" fill="url(#pr)"/>
<use href="#io"/><text x="7" y="808.300">Backing Tracks</text><use href="#sd"/><use href="#mx"/><use href="#sc"/><use href="#vt" y="917.700"/><use href="#ac"/><text class="n" x="25.200" y="967.500">16</text><use href="#xf"/></g>
<!-- RH Stems -->
<g transform="translate(766 0)"><text class="h" x="3" y="105.700">RH Stems</text><use href="#hi" x="86" y="101.700"/><use href="#ms"/><rect fill="url(#st)" y="148.330" width="20" height="110"/><rect fill="url(#st)" y="276.670" width="20" height="183.330"/>
<use href="#TL" y="130" fill="url(#py)"/><use href="#TL" y="258.330" fill="url(#pt)"/>
<use href="#io"/><text x="7" y="808.300">Backing Tracks</text><use href="#sd"/><use href="#mx"/><use href="#sc"/><use href="#vt" y="917.700"/><use href="#ac"/><text class="n" x="25.200" y="967.500">19</text><use href="#xf"/></g>
<!-- Five Resonanc -->
<g transform="translate(863 0)"><text class="h" x="3" y="105.700">Five Resonanc</text><use href="#hi" x="86" y="101.700"/><use href="#ms"/><rect fill="url(#st)" y="130" width="20" height="18.330"/><rect fill="url(#st)" y="166.670" width="20" height="293.330"/>
<use href="#TL" y="148.330" fill="url(#pg)"/>
<use href="#io"/><text x="7" y="808.300">Backing Tracks</text><use href="#sd"/><use href="#mx"/><use href="#sc"/><use href="#vt" y="910"/><use href="#ac"/><text class="n" x="25.200" y="967.500">29</text><use href="#xf"/></g>
<!-- Rain Song -->
<g transform="translate(960 0)"><text class="h" x="3" y="105.700">Rain Song</text><use href="#hi" x="86" y="101.700"/><use href="#ms"/><rect fill="url(#st)" y="130" width="20" height="18.330"/><rect fill="url(#st)" y="166.670" width="20" height="293.330"/>
<use href="#TL" y="148.330" fill="url(#pt)"/>
<use href="#io"/><text x="7" y="808.300">Backing Tracks</text><use href="#sd"/><use href="#mx"/><use href="#sc"/><use href="#vt" y="910"/><use href="#ac"/><text class="n" x="25.200" y="967.500">36</text><use href="#xf"/></g>
<!-- Aubade -->
<g transform="translate(1057 0)"><text class="h" x="3" y="105.700">Aubade</text><use href="#hi" x="86" y="101.700"/><use href="#ms"/><rect fill="url(#st)" y="130" width="20" height="36.670"/><rect fill="url(#st)" y="185" width="20" height="275"/>
<use href="#TL" y="166.670" fill="url(#pp)"/>
<use href="#io"/><text x="7" y="808.300">Backing Tracks</text><use href="#sd"/><use href="#mx"/><use href="#sc"/><use href="#vt" y="917.700"/><use href="#ac"/><text class="n" x="25.200" y="967.500">44</text><use href="#xf"/></g>
<!-- OBS and Lights -->
<g transform="translate(1154 0)"><text class="h" x="3" y="105.700">OBS and Lights</text><use href="#hi" x="86" y="101.700"/><use href="#ms"/><rect fill="url(#st)" y="258.330" width="20" height="201.670"/>
<use href="#TK" y="130" fill="url(#pc)"/><use href="#TK" y="148.330" fill="url(#pc)"/><use href="#TK" y="166.670" fill="url(#pc)"/><use href="#TK" y="185" fill="url(#pc)"/><use href="#TK" y="203.330" fill="url(#pc)"/><use href="#TK" y="221.670" fill="url(#pc)"/><use href="#TK" y="240" fill="url(#pc)"/>
<use href="#io"/><text x="7" y="808.300">Main</text><use href="#sd"/><use href="#mx"/><use href="#sc"/><use href="#vt" y="910"/><use href="#ac"/><text class="n" x="25.200" y="967.500">51</text><use href="#xf"/></g>
<!-- 52 DMXIS -->
<g transform="translate(1251 0)"><text class="h" x="3.500" y="105.700" style="letter-spacing:-.85px">52 DMXIS</text><use href="#ms"/><rect fill="url(#st)" y="130" width="20" height="330"/>
<rect x="24" y="698" width="23" height="9.500" fill="#b4b4b4" stroke="#555"/><path d="M27 698V704M29.500 698V704M33 698V704M36 698V704M38.500 698V704M42 698V704M44.500 698V704" stroke="#222" stroke-width="1.300"/>
<text x="4.300" y="725">M. From</text><rect class="d" x="4.300" y="729" width="47.400" height="12"/><text x="6.300" y="738.800">DMXIS</text><use href="#ar" x="46" y="735"/>
<rect class="d" x="4.300" y="745.700" width="47.400" height="12"/><use href="#vd" x="6" y="745.700"/><text x="14" y="755.500">Post I</text><use href="#ar" x="46" y="751.700"/>
<text x="4.300" y="768">Monitor</text><rect class="d" x="4.300" y="771.700" width="47.400" height="12"/><text x="6.300" y="781.500">In</text><use href="#ar" x="46" y="777.700"/>
<text x="4.300" y="795">A. To</text><rect class="d" x="4.300" y="799" width="47.400" height="11.500"/><text x="6.300" y="808.300">OBS an</text><use href="#ar" x="46" y="804.500"/><rect class="e" x="4.300" y="815" width="47.400" height="12"/>
<text x="4" y="853.500">A</text><rect class="d" x="13.300" y="843.300" width="38.400" height="12.400"/><text class="c" x="32.500" y="853.500" style="letter-spacing:0">−∞</text><text x="4" y="869.500">B</text><rect class="d" x="13.300" y="859.700" width="38.400" height="12"/><text class="c" x="32.500" y="869.700" style="letter-spacing:0">−∞</text>
<use href="#nm"/><use href="#vn" y="910"/><rect x="4.300" y="951" width="23" height="21.700" fill="#12e8ff" stroke="#666" stroke-width="1.200"/><text class="n" x="15.800" y="967.500">52</text><use href="#clk" x="4.300" y="995.300"/><use href="#xn"/></g>
<!-- DMXIS MIDI -->
<g transform="translate(1309 0)"><text class="h" x="3" y="105.700" style="letter-spacing:-.85px">DMXIS MIDI</text><use href="#ms"/><rect fill="url(#st)" y="258.330" width="20" height="201.670"/>
<g fill="#5dffe9"><rect y="131.300" width="95.500" height="17"/><rect y="149.600" width="95.500" height="17"/><rect y="167.900" width="95.500" height="17"/><rect y="186.300" width="95.500" height="17"/><rect y="204.600" width="95.500" height="17"/><rect y="222.900" width="95.500" height="17"/><rect y="241.300" width="95.500" height="17"/></g>
<path d="M16 131V258" stroke="#3a8f84"/>
<g fill="#145e58"><polygon points="4,134.800 11.500,139.300 4,143.800"/><polygon points="4,153.100 11.500,157.600 4,162.100"/><polygon points="4,171.500 11.500,176 4,180.500"/><polygon points="4,189.800 11.500,194.300 4,198.800"/><polygon points="4,208.100 11.500,212.600 4,217.100"/><polygon points="4,226.500 11.500,231 4,235.500"/><polygon points="4,244.800 11.500,249.300 4,253.800"/></g>
<text class="t" x="20" y="143.300">Cue 1 Lights</text><text class="t" x="20" y="161.700">Cue 2 Lights</text><text class="t" x="20" y="180">Cue 3 Lights</text><text class="t" x="20" y="198.300">Cue 4 Lights</text><text class="t" x="20" y="216.700">Lights at Zero</text><text class="t" x="20" y="235">Lights at Zero</text><text class="t" x="20" y="253.300">Lights at Zero</text>
<text x="4.300" y="725">MIDI From</text><rect class="d" x="4.300" y="729" width="86" height="12"/><text x="6.300" y="738.800">All Ins</text><use href="#ar" x="84.500" y="735"/>
<rect class="d" x="4.300" y="745.700" width="86" height="12"/><use href="#vd" x="6" y="745.700"/><text x="15" y="755.500">All Channels</text><use href="#ar" x="84.500" y="751.700"/>
<text x="4.300" y="768">Monitor</text><rect class="q" x="4.300" y="771.700" width="16.400" height="12.600"/><text class="c" x="12.500" y="782">In</text><rect class="o" x="24.700" y="771.700" width="25.300" height="12.600"/><text class="c" x="37.400" y="782">Auto</text><rect class="q" x="55.300" y="771.700" width="19.400" height="12.600"/><text class="c" x="65" y="782">Off</text>
<text x="4.300" y="795">MIDI To</text><rect class="d" x="4.300" y="799" width="86" height="11.500"/><text x="6.300" y="808.300">52-DMXIS (inst</text><use href="#ar" x="84.500" y="804.500"/><rect class="d" x="4.300" y="815" width="86" height="12"/><text x="6.300" y="824.800">16-DMXIS (inst</text><use href="#ar" x="84.500" y="821"/>
<rect x="13.300" y="951" width="23.400" height="21.700" class="o"/><text class="n" x="25" y="967.500">53</text><rect x="13.300" y="977.500" width="23.400" height="13" fill="#dcdcdc" stroke="#777" stroke-width="1.200"/><text class="c" x="25" y="988.500">S</text><use href="#clk" x="13.500" y="995.300"/><use href="#dots" x="66"/>
<path d="M20 1025H80.500" stroke="#303030" stroke-width="4" stroke-dasharray="9.300 1" fill="none"/></g>
<!-- OBS Control -->
<g transform="translate(1406 0)"><text class="h" x="3" y="105.700">OBS Control</text><use href="#ms"/><rect fill="url(#st)" y="258.330" width="20" height="201.670"/>
<g fill="#fff04a"><rect y="131.300" width="95.500" height="17"/><rect y="149.600" width="95.500" height="17"/><rect y="167.900" width="95.500" height="17"/><rect y="186.300" width="95.500" height="17"/><rect y="204.600" width="95.500" height="17"/><rect y="222.900" width="95.500" height="17"/><rect y="241.300" width="95.500" height="17"/></g>
<path d="M16 131V258" stroke="#8f8a30"/>
<g fill="#6d6a1e"><polygon points="4,134.800 11.500,139.300 4,143.800"/><polygon points="4,153.100 11.500,157.600 4,162.100"/><polygon points="4,171.500 11.500,176 4,180.500"/><polygon points="4,189.800 11.500,194.300 4,198.800"/><polygon points="4,208.100 11.500,212.600 4,217.100"/><polygon points="4,226.500 11.500,231 4,235.500"/><polygon points="4,244.800 11.500,249.300 4,253.800"/></g>
<text class="y" x="20" y="143.300">NUMBER 1</text><text class="y" x="20" y="161.700">Number 2</text>
<text x="4" y="725">MIDI From</text><rect class="d" x="4" y="729" width="86" height="12"/><text x="6" y="738.800">Computer Keyt</text><use href="#ar" x="84.500" y="735"/>
<rect class="d" x="4" y="745.700" width="86" height="12"/><use href="#vd" x="6" y="745.700"/><text x="15" y="755.500">All Channels</text><use href="#ar" x="84.500" y="751.700"/>
<text x="4" y="768">Monitor</text><rect class="q" x="4" y="771.700" width="16.400" height="12.600"/><text class="c" x="12.200" y="782">In</text><rect class="q" x="24" y="771.700" width="27" height="12.600"/><text class="c" x="37.500" y="782">Auto</text><rect class="o" x="55" y="771.700" width="19.400" height="12.600"/><text class="c" x="64.700" y="782">Off</text>
<text x="4" y="795">MIDI To</text><rect class="d" x="4" y="799" width="86" height="11.500"/><text x="6" y="808.300">IAC Driver (Bus</text><use href="#ar" x="84.500" y="804.500"/><rect class="d" x="4" y="815" width="86" height="12"/><use href="#vd" x="6" y="815"/><text x="15" y="824.800">Ch. 1</text><use href="#ar" x="84.500" y="821"/>
<rect x="13.300" y="951" width="23" height="21.700" class="o"/><text class="n" x="25" y="967.500">54</text><rect x="13.300" y="977.500" width="23" height="13" fill="#dcdcdc" stroke="#777" stroke-width="1.200"/><text class="c" x="25" y="988.500">S</text><use href="#clk" x="13.300" y="995.300"/><use href="#dots" x="66"/>
<path d="M20 1025H80.500" stroke="#303030" stroke-width="4" stroke-dasharray="9.300 1" fill="none"/></g>
<!-- Return A -->
<g transform="translate(1533 0)"><text class="h" x="3" y="105.700">A Vocal Pl</text>
<text x="4.300" y="795">A. To</text><rect class="d" x="4.300" y="799" width="47.400" height="11.500"/><text x="6.300" y="808.300">Main</text><use href="#ar" x="46" y="804.500"/><rect class="e" x="4.300" y="815" width="47.400" height="12"/>
<text x="4" y="853.500">A</text><rect class="q" x="14" y="843.300" width="37.700" height="12.400"/><text class="c" x="33" y="853.500" style="letter-spacing:0">−∞</text><text x="4" y="869.500">B</text><rect class="q" x="14" y="859.700" width="37.700" height="12"/><text class="c" x="33" y="869.700" style="letter-spacing:0">−∞</text>
<use href="#nm"/><use href="#vn" y="910"/><rect x="4.300" y="951" width="23" height="21.700" class="o"/><text class="n" x="15.800" y="967.500">A</text><use href="#xn"/></g>
<!-- Return B -->
<g transform="translate(1591.700 0)"><text class="h" x="3" y="105.700">B Delay</text>
<text x="4.300" y="795">A. To</text><rect class="d" x="4.300" y="799" width="47.400" height="11.500"/><text x="6.300" y="808.300">Main</text><use href="#ar" x="46" y="804.500"/><rect class="e" x="4.300" y="815" width="47.400" height="12"/>
<text x="4" y="853.500">A</text><rect class="q" x="14" y="843.300" width="37.700" height="12.400"/><text class="c" x="33" y="853.500" style="letter-spacing:0">−∞</text><text x="4" y="869.500">B</text><rect class="q" x="14" y="859.700" width="37.700" height="12"/><text class="c" x="33" y="869.700" style="letter-spacing:0">−∞</text>
<use href="#nm"/><use href="#vn" y="910"/><rect x="4.300" y="951" width="23" height="21.700" class="o"/><text class="n" x="15.800" y="967.500">B</text><use href="#xn"/></g>
<!-- Main -->
<text class="h" x="1653" y="105.700">Main</text>
<g fill="#12dcff"><polygon points="1653.500,116 1661.500,120.700 1653.500,125.500"/><polygon points="1653.500,134.800 1661.500,139.300 1653.500,143.800"/><polygon points="1653.500,153.100 1661.500,157.600 1653.500,162.100"/><polygon points="1653.500,171.500 1661.500,176 1653.500,180.500"/><polygon points="1653.500,189.800 1661.500,194.300 1653.500,198.800"/></g>
<g fill="#666"><polygon points="1653.500,208.100 1661.500,212.600 1653.500,217.100"/><polygon points="1653.500,226.500 1661.500,231 1653.500,235.500"/><polygon points="1653.500,244.800 1661.500,249.300 1653.500,253.800"/><polygon points="1653.500,263.100 1661.500,267.600 1653.500,272.100"/><polygon points="1653.500,281.500 1661.500,286 1653.500,290.500"/><polygon points="1653.500,299.800 1661.500,304.300 1653.500,308.800"/><polygon points="1653.500,318.100 1661.500,322.600 1653.500,327.100"/><polygon points="1653.500,336.500 1661.500,341 1653.500,345.500"/><polygon points="1653.500,354.800 1661.500,359.300 1653.500,363.800"/><polygon points="1653.500,373.100 1661.500,377.600 1653.500,382.100"/><polygon points="1653.500,391.500 1661.500,396 1653.500,400.500"/><polygon points="1653.500,409.800 1661.500,414.300 1653.500,418.800"/><polygon points="1653.500,428.100 1661.500,432.600 1653.500,437.100"/><polygon points="1653.500,446.500 1661.500,451 1653.500,455.500"/></g>
<text class="c" x="1733" y="124.600">–</text><text class="c" x="1733" y="143.300">Cue1</text><text class="c" x="1733" y="161.700">Cue2</text><text class="c" x="1733" y="180">Cue3</text><text class="c" x="1733" y="198.300">Cue4</text><text class="c" x="1733" y="216.700">Cue 5 Fade Out</text><text class="c" x="1733" y="235">Kill Switch</text><text class="c" x="1733" y="253.300">Mic only on</text><text class="c" x="1733" y="271.700">Gibson TEst</text>
<g text-anchor="end"><text x="1816" y="124.600">1</text><text x="1816" y="143.300">2</text><text x="1816" y="161.700">3</text><text x="1816" y="180">4</text><text x="1816" y="198.300">5</text><text x="1816" y="216.700">6</text><text x="1816" y="235">7</text><text x="1816" y="253.300">8</text><text x="1816" y="271.700">9</text><text x="1816" y="290">10</text><text x="1816" y="308.300">11</text><text x="1816" y="326.700">12</text><text x="1816" y="345">13</text><text x="1816" y="363.300">14</text><text x="1816" y="381.700">15</text><text x="1816" y="400">16</text><text x="1816" y="418.300">17</text><text x="1816" y="436.700">18</text><text x="1816" y="455">19</text></g>
<g text-anchor="middle"><text class="c" x="1842.500" y="124.600">178.00</text><text class="c" x="1842.500" y="143.300">178.00</text><text class="c" x="1842.500" y="161.700">120.00</text><text class="c" x="1842.500" y="180">85.00</text><text class="c" x="1842.500" y="198.300">120.00</text><text class="c g" x="1842.500" y="216.700">178.00</text><text class="c g" x="1842.500" y="235">178.00</text><text class="c g" x="1842.500" y="253.300">178.00</text><text class="c g" x="1842.500" y="271.700">178.00</text><text class="c g" x="1842.500" y="290">178.00</text><text class="c g" x="1842.500" y="308.300">178.00</text><text class="c g" x="1842.500" y="326.700">178.00</text><text class="c g" x="1842.500" y="345">178.00</text><text class="c g" x="1842.500" y="363.300">178.00</text><text class="c g" x="1842.500" y="381.700">178.00</text><text class="c g" x="1842.500" y="400">178.00</text><text class="c g" x="1842.500" y="418.300">178.00</text><text class="c g" x="1842.500" y="436.700">178.00</text><text class="c g" x="1842.500" y="455">178.00</text>
<text class="c s" x="1885" y="124.600">4 / 4</text><text class="c s" x="1885" y="143.300">4 / 4</text><text class="c s" x="1885" y="161.700">4 / 4</text><text class="c s" x="1885" y="180">4 / 4</text><text class="c s" x="1885" y="198.300">4 / 4</text><text class="c s" x="1885" y="216.700">4 / 4</text><text class="c s" x="1885" y="235">4 / 4</text><text class="c s" x="1885" y="253.300">4 / 4</text><text class="c s" x="1885" y="271.700">4 / 4</text><text class="c s" x="1885" y="290">4 / 4</text><text class="c s" x="1885" y="308.300">4 / 4</text><text class="c s" x="1885" y="326.700">4 / 4</text><text class="c s" x="1885" y="345">4 / 4</text><text class="c s" x="1885" y="363.300">4 / 4</text><text class="c s" x="1885" y="381.700">4 / 4</text><text class="c s" x="1885" y="400">4 / 4</text><text class="c s" x="1885" y="418.300">4 / 4</text><text class="c s" x="1885" y="436.700">4 / 4</text><text class="c s" x="1885" y="455">4 / 4</text></g>
<rect x="1654" y="698.800" width="9.200" height="9.200" fill="#5c5c5c"/>
<rect x="1868.700" y="697.500" width="12" height="12.500" fill="#f2f2f2" stroke="#555"/><path d="M1871.500 700V707.500" stroke="#111" stroke-width="2"/><polygon points="1873.500,700 1878.500,703.700 1873.500,707.500" fill="#222"/>
<rect x="1885.700" y="697.500" width="20" height="12.500" fill="#ff8040" stroke="#555"/><polygon points="1888.500,700 1894.500,703.700 1888.500,707.500" fill="#222"/><path d="M1896 701H1903M1896 703.700H1903M1896 706.500H1903" stroke="#222"/>
<text x="1654" y="779">Cue Out</text><rect class="d" x="1654.300" y="782.700" width="251.400" height="13.300"/><path d="M1656.800 784.500V794.500M1660.300 784.500V794.500" stroke="#222" stroke-width="2" /><text x="1664.500" y="793.700">1/2</text><use href="#ar" x="1900" y="789.300"/>
<text x="1654" y="811">Main Out</text><rect class="d" x="1654.300" y="814.700" width="251.400" height="12"/><path d="M1656.800 816.500V825M1660.300 816.500V825" stroke="#222" stroke-width="2"/><text x="1664.500" y="824.800">1/2</text><use href="#ar" x="1900" y="820.700"/>
<path d="M1651 852.300H1750M1651 869.300H1784.300" stroke="#ddd" stroke-width="1"/>
<rect class="o" x="1750" y="846.300" width="25.700" height="12.400"/><text class="c" x="1763" y="856.500">Post</text><rect class="o" x="1784.300" y="863.700" width="26.400" height="12"/><text class="c" x="1797.500" y="873.700">Post</text><text x="1782.300" y="848">Sends</text>
<rect x="1742.700" y="898.500" width="35.300" height="12" rx="6" fill="#e6e6e6" stroke="#555" stroke-width="1.100"/><use href="#inf" x="1760.300"/><use href="#pk" x="1760" y="935"/>
<rect x="1748" y="960.300" width="24.700" height="12.400" fill="#f2f2f2" stroke="#444" stroke-width="1.100"/><text class="c" x="1760.300" y="970.700">Solo</text>
<g fill="none" stroke-width="1.900"><path d="M1751 1000.700A12.700 12.700 0 0 1 1763 979.400" stroke="#1a86ee"/><path d="M1763 979.400A12.700 12.700 0 0 1 1769 1000.700" stroke="#2a2a2a"/><path d="M1759 991.700L1771.700 985" stroke="#2a2a2a"/><path d="M1756.500 1003.500a3.600 3.600 0 1 1 7 0" stroke="#2a2a2a" stroke-width="1.200"/></g>
<polygon points="1782,909.400 1794,915.700 1782,922" fill="#161616"/>
<use href="#tk" x="1789"/><rect x="1794.700" y="898" width="13.300" height="110" rx="2" fill="#262626"/><rect x="1800.700" y="898" width="1.200" height="110" fill="#555"/><rect x="1795" y="910" width="12.500" height="1" fill="#ccc"/>
<g transform="translate(1735 0)"><use href="#sc"/></g>
<path d="M1749.700 1025H1810.500" stroke="#303030" stroke-width="4" stroke-dasharray="9.300 1" fill="none"/>

<!-- status bar -->
<circle cx="20" cy="1061" r="7.500" fill="#ababab"/><text class="c" x="20" y="1065.500" style="fill:#7d7d7d;font-weight:bold">i</text>
<rect x="44" y="1052" width="1490.300" height="19" rx="2" fill="#a1a1a1"/>
<rect x="1543.700" y="1052" width="19.500" height="19" rx="2" fill="#a1a1a1"/><rect x="1564" y="1052" width="203.700" height="19" rx="2" fill="#a1a1a1"/><polygon points="1550.500,1058 1557,1061.500 1550.500,1065" fill="#222"/>
<rect x="1777" y="1052" width="20.700" height="19" rx="2" fill="#a1a1a1"/><polygon points="1784,1058 1790.500,1061.500 1784,1065" fill="#222"/><rect x="1798.300" y="1052" width="62.400" height="19" fill="#a1a1a1"/><text class="c" x="1827.500" y="1066">Blackhole</text>
<path d="M1880.500 1060V1068M1885 1057V1068M1889.500 1055V1068M1893 1059V1068" stroke="#ffb22e" stroke-width="2"/><polygon points="1900,1059 1907,1059 1903.500,1064" fill="#a4a4a4"/>
</svg>
</body></html>
